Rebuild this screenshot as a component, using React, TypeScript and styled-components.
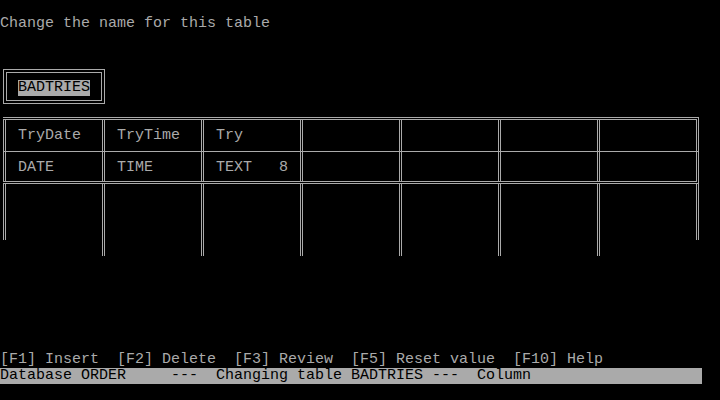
import React from "react";
import styled, { createGlobalStyle } from "styled-components";

const FG = "#aaaaaa";

const Global = createGlobalStyle`
  html, body { margin: 0; padding: 0; background: #000; }
  body { width: 720px; height: 400px; overflow: hidden; }
`;

const Screen = styled.div`
  width: 720px;
  height: 400px;
  box-sizing: border-box;
  padding: 16px 0 16px 0;
  background: #000;
  color: ${FG};
  font-family: "Liberation Mono", "DejaVu Sans Mono", monospace;
  font-size: 15px;
  line-height: 16px;
  display: flex;
  flex-direction: column;
  align-items: flex-start;
  white-space: pre;
`;

const Line = styled.div`
  height: 16px;
`;

const NameFrame = styled.div`
  margin: 37px 0 0 3px;
  border: 1px solid ${FG};
  padding: 2px;
`;

const NameInner = styled.div`
  border: 1px solid ${FG};
  padding: 7px 11px 4px 11px;
  display: flex;
`;

const Highlight = styled.span`
  display: inline-block;
  height: 16px;
  background: ${FG};
  color: #000;
`;

const Table = styled.div`
  margin: 13px 0 0 3px;
  display: flex;
  flex-direction: column;
`;

const Row = styled.div<{ $head?: boolean }>`
  display: grid;
  grid-template-columns: repeat(7, 99px);
  border-right: 3px double ${FG};
  border-top: ${(p) => (p.$head ? `3px double ${FG}` : "none")};
  border-bottom: ${(p) => (p.$head ? `1px solid ${FG}` : `3px double ${FG}`)};
`;

const Cell = styled.div<{ $head?: boolean }>`
  border-left: 3px double ${FG};
  padding: ${(p) => (p.$head ? "8px 0 7px 12px" : "8px 0 5px 12px")};
  height: 16px;
`;

const Posts = styled.div`
  display: flex;
  gap: 96px;
  align-items: flex-start;
`;

const Post = styled.div<{ $edge?: boolean }>`
  width: 0;
  border-left: 3px double ${FG};
  height: ${(p) => (p.$edge ? "56px" : "72px")};
`;

const Keys = styled(Line)`
  margin-top: auto;
`;

const StatusBar = styled(Line)`
  width: 702px;
  background: ${FG};
  color: #000;
`;

const heads = ["TryDate", "TryTime", "Try", "", "", "", ""];
const types = ["DATE", "TIME", "TEXT   8", "", "", "", ""];

export default function App() {
  return (
    <>
      <Global />
      <Screen>
        <Line>Change the name for this table</Line>
        <NameFrame>
          <NameInner>
            <Highlight>BADTRIES</Highlight>
          </NameInner>
        </NameFrame>
        <Table>
          <Row $head>
            {heads.map((h, i) => (
              <Cell $head key={i}>{h}</Cell>
            ))}
          </Row>
          <Row>
            {types.map((t, i) => (
              <Cell key={i}>{t}</Cell>
            ))}
          </Row>
          <Posts>
            {Array.from({ length: 8 }).map((_, i) => (
              <Post key={i} $edge={i === 0 || i === 7} />
            ))}
          </Posts>
        </Table>
        <Keys>[F1] Insert  [F2] Delete  [F3] Review  [F5] Reset value  [F10] Help</Keys>
        <StatusBar>Database ORDER     ---  Changing table BADTRIES ---  Column</StatusBar>
      </Screen>
    </>
  );
}
